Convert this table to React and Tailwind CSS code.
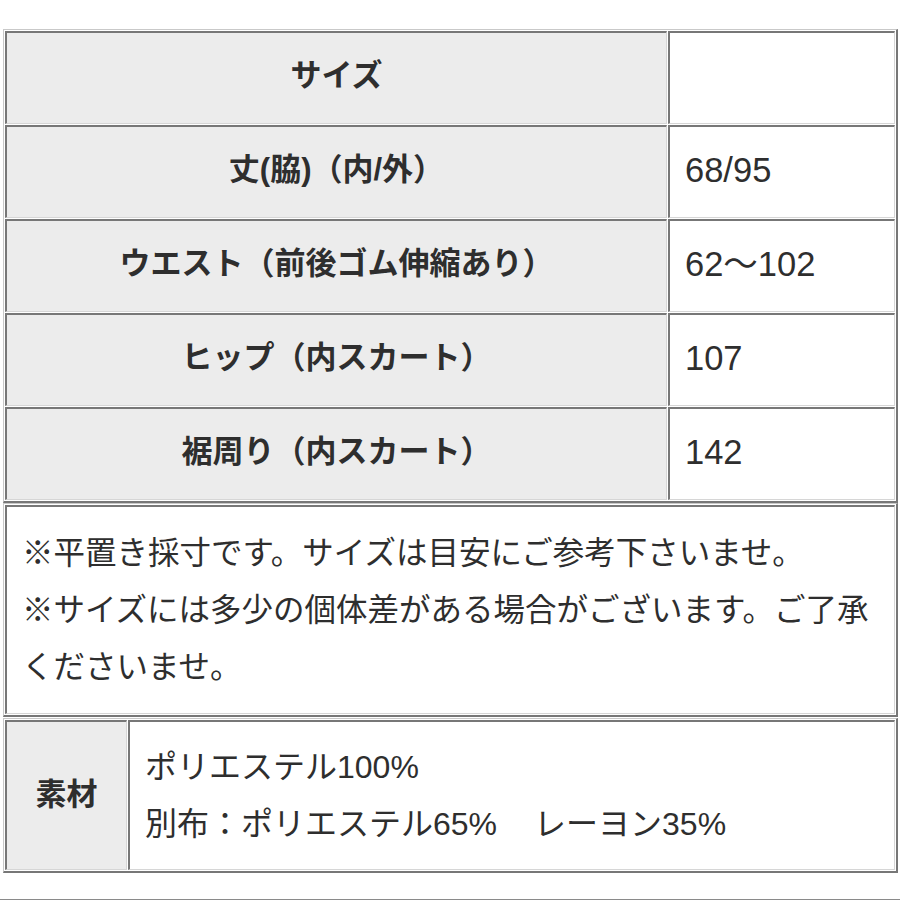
const font = { fontFamily: '"Liberation Sans", "Noto Sans CJK JP", sans-serif' };

const rows = [
  ["サイズ", ""],
  ["丈(脇)（内/外）", "68/95"],
  ["ウエスト（前後ゴム伸縮あり）", "62〜102"],
  ["ヒップ（内スカート）", "107"],
  ["裾周り（内スカート）", "142"],
];

// table-ish box: outset outer edge, inset cells
const boxCls =
  "w-[895px] ml-[3px] p-px bg-white border-t border-l border-[#c9c9c9] border-r-2 border-b-2 border-r-[#777] border-b-[#777]";
const cellCls =
  "border-t-2 border-l-2 border-[#777] border-r border-b border-r-[#d6d6d6] border-b-[#d6d6d6]";

export default function App() {
  return (
    <div className="w-[900px] h-[900px] bg-white text-[#2e2e2e] pt-[29px] overflow-hidden" style={font}>
      {/* size table */}
      <div className={`${boxCls} grid grid-cols-[662px_1fr] gap-px`}>
        {rows.map(([label, value]) => (
          <div key={label} className="contents">
            <div className={`${cellCls} h-[93px] bg-[#ececec] flex items-center justify-center pb-[3px] text-[31px] font-bold`}>
              {label}
            </div>
            <div className={`${cellCls} h-[93px] flex items-center pl-[15px] pb-[3px] text-[34.5px]`}>
              {value}
            </div>
          </div>
        ))}
      </div>

      {/* notes */}
      <div className={boxCls}>
        <div className={`${cellCls} h-[209px] px-[15px] pt-[18px] text-[31.5px] leading-[57px]`}>
          <p>※平置き採寸です。サイズは目安にご参考下さいませ。</p>
          <p>※サイズには多少の個体差がある場合がございます。ご了承くださいませ。</p>
        </div>
      </div>

      {/* material */}
      <div className={`${boxCls} mt-[1px] grid grid-cols-[122px_1fr] gap-px`}>
        <div className={`${cellCls} h-[150px] bg-[#ececec] flex items-center justify-center text-[31px] font-bold`}>
          素材
        </div>
        <div className={`${cellCls} h-[150px] flex flex-col justify-center pl-[15px] text-[32px] leading-[57px]`}>
          <p>ポリエステル100%</p>
          <p>
            別布：ポリエステル65%　<span className="pl-[5px]">レーヨン35%</span>
          </p>
        </div>
      </div>

      <div className="mt-[26px] border-t border-[#8a8a8a]" />
    </div>
  );
}
